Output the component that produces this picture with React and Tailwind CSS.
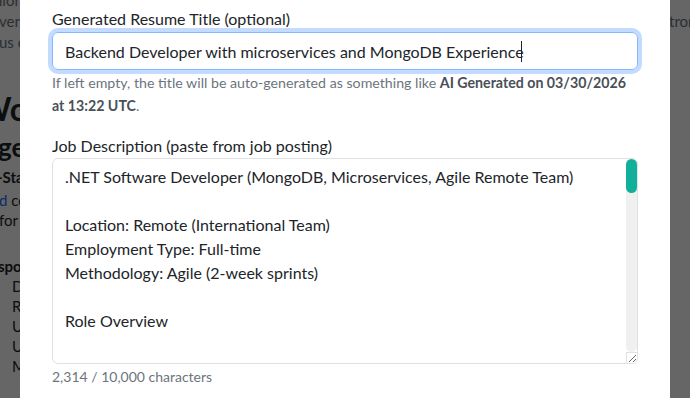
import React from 'react';

const jobDescription = [
  '.NET Software Developer (MongoDB, Microservices, Agile Remote Team)',
  '',
  'Location: Remote (International Team)',
  'Employment Type: Full-time',
  'Methodology: Agile (2-week sprints)',
  '',
  'Role Overview',
  '',
  'We are looking for a .NET Software Developer to join a distributed',
  'team building cloud-based microservices for a fast-growing platform.',
  'You will design, build and maintain backend services in C# and .NET,',
  'working closely with product owners, QA and DevOps engineers.',
  '',
  'Key Responsibilities',
  '- Design and develop RESTful APIs and microservices using .NET 8',
  '- Model, query and optimize data stored in MongoDB',
  '- Participate in sprint planning, daily stand-ups and retrospectives',
  '- Write clean, testable code with unit and integration tests',
  '- Review pull requests and share knowledge with the team',
  '- Troubleshoot production issues and improve system reliability',
  '- Collaborate on CI/CD pipelines and containerized deployments',
  '',
  'Required Skills',
  '- 4+ years of professional experience with C# and .NET',
  '- Solid experience with MongoDB (schema design, indexes, aggregation)',
  '- Hands-on experience building microservices architectures',
  '- Knowledge of message brokers such as RabbitMQ or Kafka',
  '- Experience with Docker and Kubernetes',
  '- Familiarity with Git, code reviews and Agile practices',
  '- Good written and spoken English',
  '',
  'What We Offer',
  '- 100% remote work with flexible hours',
  '- Competitive salary paid in USD or EUR',
  '- Annual learning budget for courses and conferences',
].join('\n');

export default function App() {
  return (
    <div className="relative h-[398px] w-[690px] overflow-hidden bg-white font-['Lato',sans-serif] text-[#212529]">
      {/* Page behind the modal */}
      <div className="flex justify-between">
        <div className="w-[20px] overflow-hidden">
          <div className="-mt-[10px] text-[15px] leading-[21px] text-[#6c757d] whitespace-nowrap">
            <p className="-ml-[6px]">nior</p>
            <p className="-ml-[1px]">ver</p>
            <p className="-ml-[1px]">us c</p>
          </div>
          <p className="mt-[36px] -ml-[22px] text-[32px] font-bold leading-[40px] whitespace-nowrap">Wo</p>
          <p className="-ml-[2px] text-[26px] font-bold leading-[36px] whitespace-nowrap">ge</p>
          <p className="mt-[1px] -ml-[3px] text-[15px] font-bold leading-[22px] whitespace-nowrap">-Sta</p>
          <div className="mt-[2px] text-[15px] leading-[20px] whitespace-nowrap">
            <p className="-ml-[1px]"><span className="text-[#0d6efd]">d</span> co</p>
            <p className="-ml-[1px]">for</p>
          </div>
          <p className="mt-[26px] -ml-[2px] text-[15px] font-bold leading-[20px] whitespace-nowrap">spo</p>
          <ul className="pl-[12px] text-[15px] leading-[20px] whitespace-nowrap">
            <li>D</li>
            <li>R</li>
            <li>U</li>
            <li>U</li>
            <li>M</li>
          </ul>
        </div>
        <div className="w-[20px] overflow-hidden pt-[11px] text-[15px] leading-[21px] text-[#6c757d] whitespace-nowrap">
          <p className="-ml-[1px]">tron</p>
        </div>
      </div>

      {/* Backdrop */}
      <div className="absolute inset-0 bg-black/60" />

      {/* Modal */}
      <div className="absolute inset-y-0 left-[20px] right-[20px] bg-white px-8 pt-[7px]">
        <label className="mb-[1px] block text-base leading-6">Generated Resume Title (optional)</label>
        <div className="relative">
          <input
            readOnly
            value="Backend Developer with microservices and MongoDB Experience"
            className="block h-[38px] w-full rounded-md border border-[#86b7fe] px-3 text-base text-[#212529] shadow-[0_0_0_4px_rgba(13,110,253,0.25)] outline-none"
          />
          <span className="absolute left-[469px] top-[9px] h-[21px] w-px bg-[#212529]" />
        </div>
        <p className="mt-[1px] text-[14.2px] leading-[23px] text-[#6c757d]">
          If left empty, the title will be auto-generated as something like{' '}
          <strong className="font-bold text-[#495057]">AI Generated on 03/30/2026 at 13:22 UTC</strong>.
        </p>

        <label className="mt-[17px] block text-base leading-6">Job Description (paste from job posting)</label>
        <div className="relative">
          <textarea
            readOnly
            value={jobDescription}
            className="block h-[206px] w-full overflow-hidden rounded-md border border-[#dee2e6] py-1.5 pl-3 pr-[24px] text-base leading-6 text-[#212529] outline-none whitespace-pre"
          />
          {/* Scrollbar */}
          <div className="pointer-events-none absolute right-px top-px flex h-[193px] w-[11px] flex-col rounded-full bg-[#f0f0f0]">
            <div className="h-[34px] w-full rounded-full bg-[#12b09b]" />
          </div>
          <div className="pointer-events-none absolute bottom-px right-px h-[11px] w-[11px] border-l border-t border-[#e2e2e2]" />
        </div>
        <p className="mt-[2px] text-sm leading-[21px] text-[#6c757d]">2,314 / 10,000 characters</p>
      </div>
    </div>
  );
}
